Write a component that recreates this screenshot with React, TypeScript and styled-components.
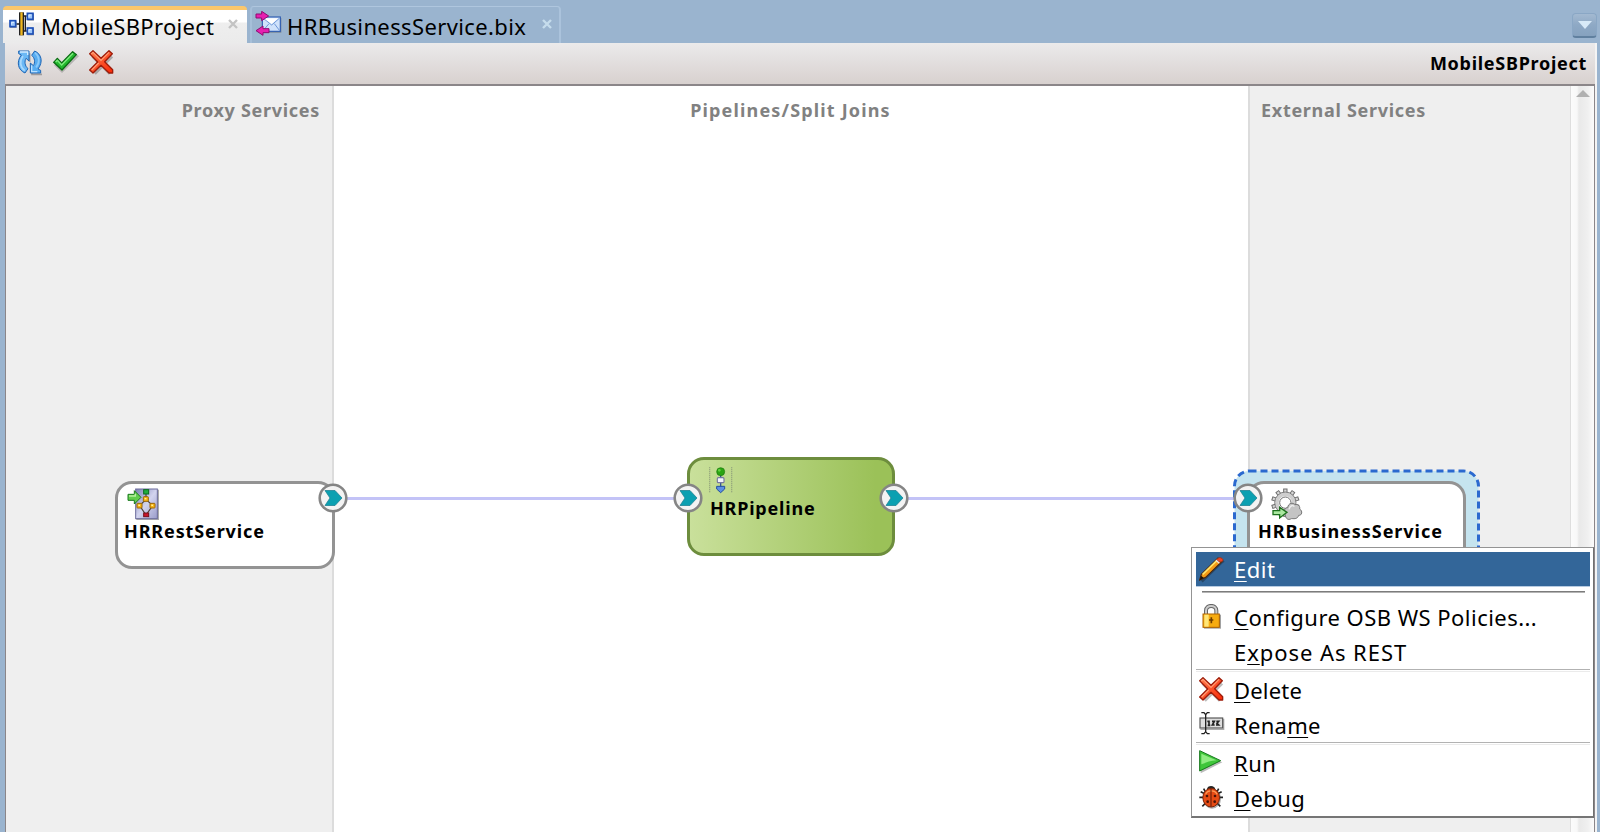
import React from "react";
import styled, { createGlobalStyle } from "styled-components";

const GlobalStyle = createGlobalStyle`
  * { box-sizing: border-box; }
  body { margin: 0; background: #9ab4cf; overflow: hidden; }
`;

const Window = styled.div`
  width: 1600px;
  height: 832px;
  display: flex;
  flex-direction: column;
  padding: 6px 3px 0;
  background: #9ab4cf;
  font-family: "Noto Sans", "Open Sans", sans-serif;
  color: #000;
  overflow: hidden;
`;

const TabBar = styled.div`
  height: 37px;
  display: flex;
  align-items: flex-start;
  gap: 3px;
  flex: none;
`;

const Tab = styled.div<{ $active?: boolean; $width: number }>`
  width: ${(p) => p.$width}px;
  height: 37px;
  display: flex;
  align-items: flex-start;
  border-radius: 4px 4px 0 0;
  border-top: ${(p) => (p.$active ? "4px solid #fbc76c" : "1px solid #afc6de")};
  border-right: ${(p) => (p.$active ? "0" : "2px solid #abc3dc")};
  border-left: ${(p) => (p.$active ? "0" : "2px solid #a6bfd9")};
  padding-left: ${(p) => (p.$active ? 6 : 3)}px;
  padding-top: ${(p) => (p.$active ? 2 : 4)}px;
  background: ${(p) =>
    p.$active ? "linear-gradient(#fff 0, #fff 12px, #eeeeee 13px, #ebebeb 100%)" : "transparent"};
`;

const TabTitle = styled.span<{ $ls: number; $left: number; $top: number }>`
  margin-left: ${(p) => p.$left}px;
  margin-top: ${(p) => p.$top}px;
  font-size: 22px;
  line-height: 30px;
  letter-spacing: ${(p) => p.$ls}px;
  white-space: nowrap;
`;

const CloseMark = styled.svg<{ $right: number; $top: number }>`
  margin-left: auto;
  margin-right: ${(p) => p.$right}px;
  margin-top: ${(p) => p.$top}px;
  flex: none;
`;

const ListButton = styled.div`
  width: 25px;
  height: 25px;
  margin: 7px 0 0 auto;
  display: flex;
  align-items: center;
  justify-content: center;
  border-radius: 4px;
  border: 1px solid #8aa7c5;
  border-bottom: 2px solid #60809f;
  background: linear-gradient(#a3b9d1, #8ea9c5 50%, #86a2bf);
`;

const Pane = styled.div`
  flex: 1;
  min-height: 0;
  margin-left: 2px;
  width: 1592px;
  display: flex;
  flex-direction: column;
  background: #f4f4f4;
`;

const Toolbar = styled.div`
  height: 41px;
  flex: none;
  width: 1590px;
  display: flex;
  align-items: center;
  padding: 0 8px 2px 12px;
  background: linear-gradient(#ebeaeb, #d8d1cf);
`;

const ToolButtons = styled.div`
  display: flex;
  gap: 10px;
  flex: 1;
`;

const ToolbarTitle = styled.span`
  font-size: 18px;
  line-height: 24px;
  font-weight: 700;
  letter-spacing: 0.72px;
`;

const Canvas = styled.div`
  position: relative;
  flex: 1;
  min-height: 0;
  width: 1590px;
  display: grid;
  grid-template-columns: 328px 914px 322px 1fr;
  border: 2px solid #8b8689;
  border-left-width: 1px;
  border-right-width: 1px;
  border-bottom: 0;
`;

const Lane = styled.section<{ $align: "left" | "center" | "right"; $tone: string; $line?: "left" | "right" }>`
  background: ${(p) => p.$tone};
  text-align: ${(p) => p.$align};
  padding: 11px 12px 0 11px;
  border-left: ${(p) => (p.$line === "left" ? "2px solid #dcdcdc" : "0")};
  border-right: ${(p) => (p.$line === "right" ? "2px solid #dcdcdc" : "0")};
`;

const LaneTitle = styled.h2<{ $ls?: number }>`
  margin: 0;
  font-size: 18px;
  line-height: 26px;
  font-weight: 700;
  letter-spacing: ${(p) => p.$ls ?? 0.7}px;
  color: #818181;
`;

const ScrollTrack = styled.div`
  display: flex;
  justify-content: center;
  padding-top: 4px;
  border-left: 1px solid #dedede;
  background: linear-gradient(90deg, #fbfbfb 0, #f8f8f8 6px, #e9e9e9 8px, #f0f0f0 17px, #fafafa 22px);
`;

const Node = styled.div<{ $x: number; $y: number; $w: number; $h: number; $green?: boolean }>`
  position: absolute;
  left: ${(p) => p.$x}px;
  top: ${(p) => p.$y}px;
  width: ${(p) => p.$w}px;
  height: ${(p) => p.$h}px;
  border-radius: 17px;
  border: 3px solid ${(p) => (p.$green ? "#6d8d3d" : "#939393")};
  background: ${(p) => (p.$green ? "linear-gradient(90deg, #c9e09b, #9bc158 92%)" : "#fff")};
  display: flex;
  flex-direction: column;
  align-items: flex-start;
`;

const NodeName = styled.span<{ $left: number; $ls: number }>`
  margin-left: ${(p) => p.$left}px;
  font-size: 18px;
  line-height: 24px;
  font-weight: 700;
  letter-spacing: ${(p) => p.$ls}px;
`;

const NodeIcon = styled.div<{ $left: number; $top: number; $h: number }>`
  margin-left: ${(p) => p.$left}px;
  padding-top: ${(p) => p.$top}px;
  height: ${(p) => p.$h}px;
  svg { display: block; }
`;

const Selection = styled.svg`
  position: absolute;
  left: 1226px;
  top: 383px;
`;

const Wire = styled.div<{ $x: number; $w: number }>`
  position: absolute;
  top: 411px;
  left: ${(p) => p.$x}px;
  width: ${(p) => p.$w}px;
  height: 3px;
  background: #c3c3f7;
`;

const PortMark = styled.svg<{ $x: number }>`
  position: absolute;
  top: 397px;
  left: ${(p) => p.$x - 15}px;
`;

const Menu = styled.div`
  position: absolute;
  left: 1185px;
  top: 461px;
  width: 403px;
  height: 271px;
  padding: 4px 3px 0 4px;
  background: #fff;
  border: 1px solid #949494;
  border-right-color: #707070;
  border-bottom: 2px solid #757575;
`;

const MenuRow = styled.div<{ $active?: boolean }>`
  height: 35px;
  display: flex;
  align-items: flex-start;
  background: ${(p) => (p.$active ? "#336699" : "#fff")};
  color: ${(p) => (p.$active ? "#fff" : "#000")};
  border-bottom: ${(p) => (p.$active ? "1px solid #b8cce2" : "0")};
`;

const MenuIcon = styled.div`
  width: 38px;
  padding: 5px 0 0 3px;
  flex: none;
  svg { display: block; }
`;

const MenuText = styled.span<{ $ls: number; $top: number }>`
  font-size: 22px;
  line-height: 30px;
  margin-top: ${(p) => p.$top}px;
  letter-spacing: ${(p) => p.$ls}px;
  white-space: nowrap;
`;

const Mnemonic = styled.span`
  text-decoration: underline;
  text-decoration-thickness: 1px;
  text-underline-offset: 3px;
  text-decoration-skip-ink: none;
`;

const StrongSeparator = styled.div`
  height: 12px;
  padding: 4px 5px 0 6px;
  &::before {
    content: "";
    display: block;
    height: 1px;
    background: #7c7c7c;
    box-shadow: 0 1px 0 #b4b4b4;
  }
`;

const Separator = styled.div`
  height: 3px;
  border-top: 1px solid #b2b2b2;
  border-bottom: 1px solid #ebebeb;
`;

/* Icons are drawn on a grid of three units per pixel. */
const Icon = ({ w, h, children }: { w: number; h: number; children: React.ReactNode }) => (
  <svg width={w} height={h} viewBox={`0 0 ${w * 3} ${h * 3}`} fill="none">
    {children}
  </svg>
);

const ProjectIcon = () => (
  <Icon w={26} h={25}>
    <path d="M22 36H34M45 12H53M45 57H53M49 12V58" stroke="#222" strokeWidth="4" />
    <rect x="30" y="1" width="15" height="69" fill="#222" />
    <rect x="34" y="1" width="7" height="69" fill="#f0b820" />
    {[[3, 26], [55, 4], [55, 48]].map(([x, y]) => (
      <g key={y}>
        <rect x={x} y={y + 2} width="20" height="20" fill="#555" opacity=".5" />
        <rect x={x} y={y} width="17" height="18" fill="#9cc6fa" stroke="#1d50b8" strokeWidth="5" />
        <path d={`M${x + 5} ${y + 12}V${y + 5}H${x + 12}`} stroke="#dcecff" strokeWidth="3" />
      </g>
    ))}
  </Icon>
);

const MailIcon = () => (
  <Icon w={27} h={26}>
    <rect x="24" y="21" width="55" height="44" fill="#555" opacity=".5" />
    <rect x="22" y="18" width="54" height="43" fill="#cfe2fb" stroke="#2e5cb0" strokeWidth="3.5" />
    <path d="M24 21L50 42L74 21M24 59L42 38M74 59L58 38" stroke="#6f98d8" strokeWidth="3" />
    <path d="M27 22L50 39L70 22Z" fill="#fff" />
    <path d="M3 9H20V1L41 15L20 29V21H3Z" fill="#e71fb0" stroke="#8d0d70" strokeWidth="3" />
    <path d="M42 53H24V45L3 59L24 73V65H42Z" fill="#e71fb0" stroke="#8d0d70" strokeWidth="3" />
  </Icon>
);

const RefreshIcon = () => (
  <Icon w={26} h={26}>
    <path d="M75 73H45V44M38 10V36" stroke="#444" strokeWidth="5" opacity=".4" />
    <path d="M5 3H36V33L27 25C22 34 23 48 33 56L24 69C3 60 -3 36 13 15L5 11Z" fill="#6bb8f5" stroke="#1f65b4" strokeWidth="3" strokeLinejoin="round" />
    <path d="M9 6H32V15" stroke="#d3ecff" strokeWidth="4" />
    <path d="M18 18C7 33 9 51 23 62" stroke="#a9d9fd" strokeWidth="5" />
    <path d="M71 69H40V39L49 47C55 38 54 24 44 16L53 3C74 12 79 36 63 57L71 61Z" fill="#58adf1" stroke="#1f65b4" strokeWidth="3" strokeLinejoin="round" />
    <path d="M44 46V65H61" stroke="#b9e0ff" strokeWidth="4" />
    <path d="M54 8C68 20 69 38 57 52" stroke="#8ccafa" strokeWidth="5" />
  </Icon>
);

const CheckIcon = () => (
  <Icon w={26} h={26}>
    <path d="M8 41L27 59L73 14" stroke="#666" strokeWidth="14" opacity=".35" />
    <path d="M2 37L13 25L26 39L59 5L70 14L27 60Z" fill="#23b82e" stroke="#096b12" strokeWidth="4" strokeLinejoin="round" />
    <path d="M8 36L13 31L26 45L60 10" stroke="#7cea7c" strokeWidth="4.5" />
  </Icon>
);

const CrossIcon = () => (
  <Icon w={26} h={26}>
    <defs>
      <linearGradient id="cross" gradientUnits="userSpaceOnUse" x1="5" y1="5" x2="66" y2="70">
        <stop offset="0" stopColor="#ff7a4c" />
        <stop offset="1" stopColor="#f92a08" />
      </linearGradient>
    </defs>
    <path d="M14 16L66 68M66 16L14 68" stroke="#444" strokeWidth="18" opacity=".35" />
    <path
      d="M2 11L12 2L36 25L60 2L70 11L47 35L71 59V69H60L36 46L12 69L2 60L26 36Z"
      fill="url(#cross)" stroke="#9d1c0a" strokeWidth="4" strokeLinejoin="round"
    />
    <path d="M7 12L12 7L36 31L60 7M8 60L29 39" stroke="#ff9c74" strokeWidth="3.5" />
  </Icon>
);

const RestIcon = () => (
  <Icon w={32} h={33}>
    <defs>
      <linearGradient id="rest" x1="0" y1="0" x2="1" y2="1">
        <stop offset="0" stopColor="#7e80b4" />
        <stop offset=".5" stopColor="#d2d4ee" />
        <stop offset="1" stopColor="#9a9cca" />
      </linearGradient>
    </defs>
    <rect x="28" y="5" width="68" height="91" fill="#555" opacity=".5" />
    <rect x="26" y="3" width="65" height="89" fill="url(#rest)" stroke="#6c6d9c" strokeWidth="3" />
    <path d="M57 12V34L38 53L57 81L77 53L57 34" stroke="#4d4135" strokeWidth="3.5" />
    <rect x="50" y="5" width="15" height="13" fill="#1fae3e" stroke="#0a6a20" strokeWidth="3" />
    {[[49, 26], [30, 46], [69, 46]].map(([x, y]) => (
      <g key={x}>
        <rect x={x} y={y} width="15" height="14" rx="2" fill="#f8b616" stroke="#9a6505" strokeWidth="3" />
        <rect x={x + 4} y={y + 4} width="5" height="4" fill="#fff2a0" />
      </g>
    ))}
    <rect x="50" y="75" width="15" height="11" fill="#c8152b" stroke="#76101c" strokeWidth="3" />
    <path d="M3 19H22V8L42 28L22 48V37H3Z" fill="#62cd4d" stroke="#197a1d" strokeWidth="3" />
    <path d="M6 24H25V17" stroke="#b6f0a0" strokeWidth="4" />
  </Icon>
);

const PipelineIcon = () => (
  <Icon w={26} h={27}>
    <path d="M5 1V76M71 1V76" stroke="#8c9c78" strokeWidth="4" strokeDasharray="3 3" />
    <path d="M38 20V64" stroke="#35559a" strokeWidth="4" />
    <circle cx="38" cy="14" r="12" fill="#2ba512" stroke="#1b7a0c" strokeWidth="2" />
    <circle cx="34" cy="10" r="4" fill="#60d23e" />
    <rect x="28" y="32" width="20" height="15" rx="3" fill="#f4f4fc" stroke="#77799f" strokeWidth="3.5" />
    <path d="M26 58H50V66L38 77L26 66Z" fill="#5c90e2" stroke="#244f9f" strokeWidth="3" />
  </Icon>
);

const GearIcon = () => (
  <Icon w={32} h={33}>
    <g stroke="#6f6f6f" fill="#d7d7d7">
      {Array.from({ length: 10 }, (_, i) => (
        <rect key={i} x="38" y="3" width="10" height="14" strokeWidth="3" transform={`rotate(${i * 36} 43 44)`} />
      ))}
      <circle cx="43" cy="44" r="26" strokeWidth="12" stroke="#cecece" fill="none" />
      <circle cx="43" cy="44" r="32" strokeWidth="2.5" fill="none" />
      <circle cx="43" cy="44" r="17" strokeWidth="3" fill="#fff" />
    </g>
    <path d="M43 80C36 70 41 59 50 59C52 44 66 43 72 50C82 47 88 56 86 63C96 69 93 83 83 82C79 96 66 91 61 92C51 98 43 91 43 80Z" fill="#c4c4c4" stroke="#777" strokeWidth="3" />
    <path d="M54 64C58 51 66 51 70 56" stroke="#eee" strokeWidth="4" />
    <path d="M6 68H26V58L48 73L26 90V80H6Z" fill="#aae8a0" stroke="#1d701d" strokeWidth="4" />
  </Icon>
);

const PencilIcon = () => (
  <Icon w={27} h={26}>
    <path d="M8 73L66 17L74 11" stroke="#111" strokeWidth="9" opacity=".35" />
    <path d="M2 69L7 52L57 3L69 13L20 61Z" fill="#f39a16" stroke="#4e270a" strokeWidth="3.5" />
    <path d="M11 52L57 7" stroke="#ffe56a" strokeWidth="5" />
    <path d="M56 4Q62 -1 69 4T69 14L60 15L53 8Z" fill="#ee4424" stroke="#8e2c10" strokeWidth="2" />
    <path d="M51 10L61 19" stroke="#e6e6e6" strokeWidth="4" />
    <path d="M2 69L6 56L15 63Z" fill="#1b130c" />
  </Icon>
);

const LockIcon = () => (
  <Icon w={27} h={27}>
    <path d="M21 38V20C21 1 52 1 52 20V38" stroke="#666" strokeWidth="12" />
    <path d="M21 38V20C21 1 52 1 52 20V38" stroke="#ccc" strokeWidth="6" />
    <rect x="15" y="32" width="51" height="42" fill="#444" opacity=".5" />
    <rect x="12" y="30" width="49" height="40" fill="#f7ac11" stroke="#ad6200" strokeWidth="3" />
    <rect x="16" y="32" width="13" height="36" fill="#ffe678" />
    <path d="M30 48H43M37 40V58" stroke="#6e3d00" strokeWidth="5" />
  </Icon>
);

const RenameIcon = () => (
  <Icon w={27} h={26}>
    <path d="M74 20V52H4" stroke="#777" strokeWidth="4" opacity=".6" />
    <rect x="3" y="18" width="68" height="30" fill="#dedede" stroke="#555" strokeWidth="3.5" />
    <path d="M25 28H30V39M26 40H34M39 28H46L40 39H47M52 28H59L54 34L59 39H51" stroke="#222" strokeWidth="5" />
    <path d="M7 2H15L20 8L25 2H32M20 7V60M7 65H15L20 59L25 65H32" stroke="#222" strokeWidth="4" />
  </Icon>
);

const RunIcon = () => (
  <Icon w={27} h={26}>
    <path d="M5 9L70 37L5 70Z" fill="#555" opacity=".4" />
    <path d="M2 2L65 32L2 63Z" fill="#3fc63a" stroke="#14771a" strokeWidth="3" />
    <path d="M7 11V43C20 38 35 32 52 31Z" fill="#90ec82" />
  </Icon>
);

const BugIcon = () => (
  <Icon w={27} h={26}>
    <path d="M14 11L20 22M59 11L53 22M1 37H15M72 37H58M10 64L20 54M64 64L54 54M5 20L19 27M68 20L54 27" stroke="#222" strokeWidth="5" />
    <path d="M24 15C22 -1 50 -1 49 15Z" fill="#252525" />
    <ellipse cx="39" cy="41" rx="27" ry="30" fill="#444" opacity=".45" />
    <ellipse cx="36.500" cy="38" rx="25" ry="28" fill="#e64b14" stroke="#7c2408" strokeWidth="3" />
    <path d="M20 28C24 14 49 14 54 28" stroke="#ff9a54" strokeWidth="4" />
    <path d="M36 11V65" stroke="#5b1b08" strokeWidth="3" />
    <g fill="#4b1306">
      <circle cx="24" cy="33" r="4" /><circle cx="48" cy="33" r="4" />
      <circle cx="26" cy="50" r="4" /><circle cx="47" cy="50" r="4" />
    </g>
  </Icon>
);

const Close = ({ color, right, top }: { color: string; right: number; top: number }) => (
  <CloseMark $right={right} $top={top} width="10" height="10" viewBox="0 0 10 10">
    <path d="M1 1L9 9M9 1L1 9" stroke={color} strokeWidth="2.400" />
  </CloseMark>
);

const Port = ({ x }: { x: number }) => (
  <PortMark $x={x} width="30" height="30" viewBox="0 0 30 30">
    <circle cx="15" cy="15" r="13.300" fill="#f3f3f3" stroke="#858585" strokeWidth="2.600" />
    <path d="M7 7.500H17L24 15L17 22.500H7L12 15Z" fill="#0ba0b1" stroke="#218394" strokeWidth="0.800" />
  </PortMark>
);

type EntryProps = {
  icon?: React.ReactNode;
  before?: string;
  mnemonic: string;
  after: string;
  ls: number;
  top?: number;
  active?: boolean;
};

const Entry = ({ icon, before, mnemonic, after, ls, top = 3, active }: EntryProps) => (
  <MenuRow $active={active}>
    <MenuIcon>{icon}</MenuIcon>
    <MenuText $ls={ls} $top={top}>
      {before}
      <Mnemonic>{mnemonic}</Mnemonic>
      {after}
    </MenuText>
  </MenuRow>
);

export default function App() {
  return (
    <>
      <GlobalStyle />
      <Window>
        <TabBar>
          <Tab $active $width={244}>
            <ProjectIcon />
            <TabTitle $ls={0.3} $left={6} $top={-1}>MobileSBProject</TabTitle>
            <Close color="#c3c3c3" right={9} top={7} />
          </Tab>
          <Tab $width={311}>
            <MailIcon />
            <TabTitle $ls={0.38} $left={5} $top={0}>HRBusinessService.bix</TabTitle>
            <Close color="#c5dcec" right={7} top={8} />
          </Tab>
          <ListButton>
            <svg width="14" height="8" viewBox="0 0 14 8"><path d="M0 0H14L7 8Z" fill="#d8eaf8" /></svg>
          </ListButton>
        </TabBar>
        <Pane>
          <Toolbar>
            <ToolButtons>
              <RefreshIcon />
              <CheckIcon />
              <CrossIcon />
            </ToolButtons>
            <ToolbarTitle>MobileSBProject</ToolbarTitle>
          </Toolbar>
          <Canvas>
            <Lane $align="right" $tone="#efefef" $line="right"><LaneTitle>Proxy Services</LaneTitle></Lane>
            <Lane $align="center" $tone="#ffffff"><LaneTitle $ls={1.16}>Pipelines/Split Joins</LaneTitle></Lane>
            <Lane $align="left" $tone="#efefef" $line="left"><LaneTitle>External Services</LaneTitle></Lane>
            <ScrollTrack>
              <svg width="14" height="8" viewBox="0 0 14 8"><path d="M7 0L14 7H0Z" fill="#b0b0b0" /></svg>
            </ScrollTrack>

            <Wire $x={335} $w={340} />
            <Wire $x={890} $w={345} />

            <Node $x={109} $y={395} $w={220} $h={88}>
              <NodeIcon $left={9} $top={4} $h={35}><RestIcon /></NodeIcon>
              <NodeName $left={6} $ls={0.88}>HRRestService</NodeName>
            </Node>
            <Node $x={681} $y={371} $w={208} $h={99} $green>
              <NodeIcon $left={18} $top={7} $h={36}><PipelineIcon /></NodeIcon>
              <NodeName $left={20} $ls={0.8}>HRPipeline</NodeName>
            </Node>
            <Selection width="250" height="114" viewBox="0 0 250 114">
              <rect x="2.500" y="2" width="244" height="111" rx="15" fill="#c5e4ef" stroke="#2b69cf" strokeWidth="3" strokeDasharray="7 4" />
            </Selection>
            <Node $x={1241} $y={395} $w={219} $h={89}>
              <NodeIcon $left={21} $top={4} $h={35}><GearIcon /></NodeIcon>
              <NodeName $left={8} $ls={0.96}>HRBusinessService</NodeName>
            </Node>

            <Port x={326.5} />
            <Port x={681.5} />
            <Port x={887.5} />
            <Port x={1242} />

            <Menu>
              <Entry active icon={<PencilIcon />} mnemonic="E" after="dit" ls={0.5} top={2} />
              <StrongSeparator />
              <Entry icon={<LockIcon />} mnemonic="C" after="onfigure OSB WS Policies..." ls={0.46} />
              <Entry before="E" mnemonic="x" after="pose As REST" ls={0.94} />
              <Separator />
              <Entry icon={<CrossIcon />} mnemonic="D" after="elete" ls={0.2} />
              <Entry icon={<RenameIcon />} before="Rena" mnemonic="m" after="e" ls={0.3} />
              <Separator />
              <Entry icon={<RunIcon />} mnemonic="R" after="un" ls={0.45} />
              <Entry icon={<BugIcon />} mnemonic="D" after="ebug" ls={0.4} />
            </Menu>
          </Canvas>
        </Pane>
      </Window>
    </>
  );
}
